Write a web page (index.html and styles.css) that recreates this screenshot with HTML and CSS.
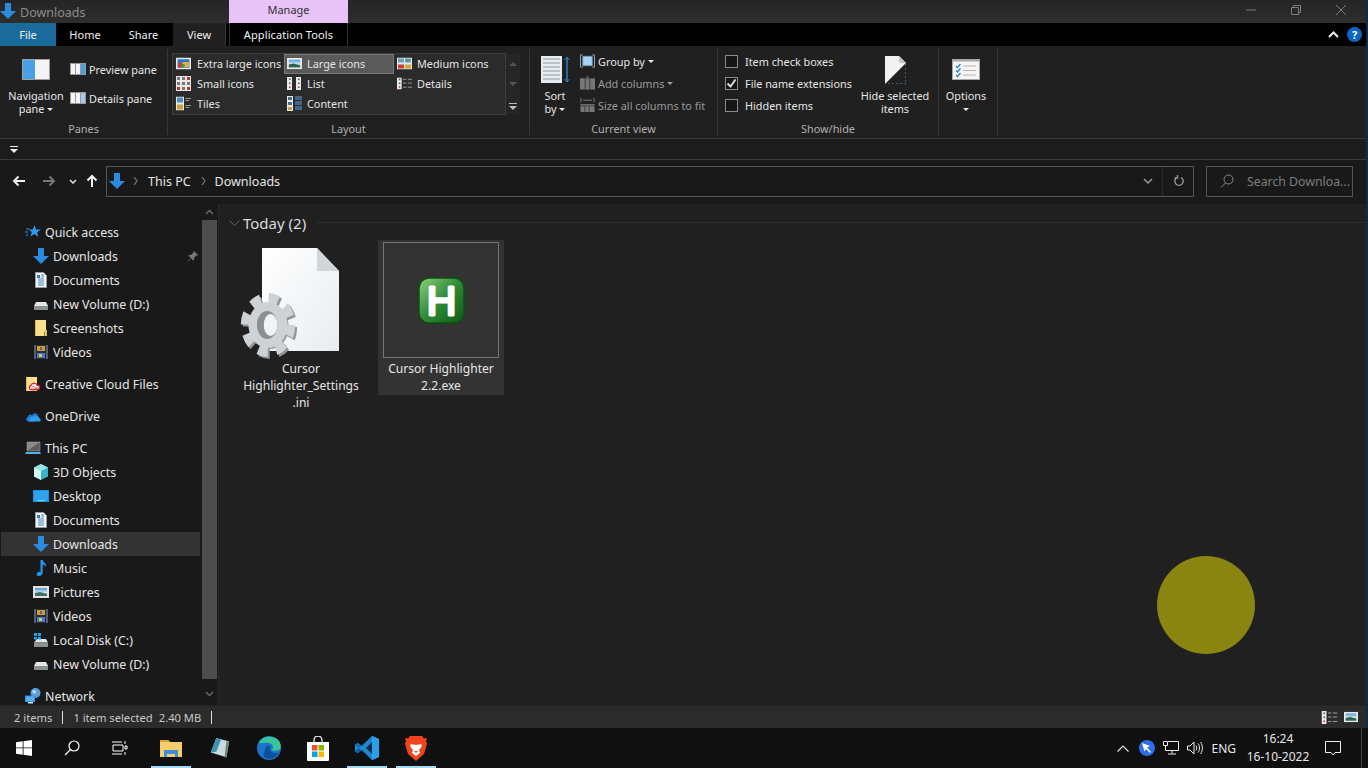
FILE: index.html
```html
<!DOCTYPE html>
<html lang="en">
<head>
    <meta charset="UTF-8">
    <title>Downloads</title>
    <link rel="stylesheet" href="styles.css">
</head>
<body>
    <svg class="defs" width="0" height="0">
        <defs>
            <linearGradient id="pageFill" x1="0" y1="0" x2="1" y2="1"><stop offset="0" stop-color="#ffffff"/><stop offset="1" stop-color="#e9ecef"/></linearGradient>
            <linearGradient id="hFill" x1="0" y1="0" x2="1" y2="1"><stop offset="0" stop-color="#8fd07f"/><stop offset="0.5" stop-color="#2f8a35"/><stop offset="1" stop-color="#0f5a17"/></linearGradient>
            <linearGradient id="skyFill" x1="0" y1="0" x2="0" y2="1"><stop offset="0" stop-color="#4a9bd8"/><stop offset="0.55" stop-color="#cfe3ea"/><stop offset="1" stop-color="#4d7f70"/></linearGradient>
            <symbol id="i-down" viewBox="0 0 16 16"><path d="M5 0h6v8h5l-8 8-8-8h5z" fill="#2b8be0"/></symbol>
            <symbol id="i-star" viewBox="0 0 16 16"><path d="M9.500 1l1.600 4.400 4.600.2-3.600 2.900 1.200 4.500L9.500 10l-3.900 2.600 1.200-4.500L3.500 5.600l4.400-.2z" fill="#2c9bf0"/><path d="M1 5h3M0 8h3M1 11h2" stroke="#2c9bf0"/></symbol>
            <symbol id="i-doc" viewBox="0 0 16 16"><path d="M2.500.5h8l3 3v12h-11z" fill="#f2f4f6" stroke="#9a9a9a"/><path d="M5 7h6M5 9h6M5 11h6M5 13h6M8 3h3M8 5h3" stroke="#4a86c5"/><path d="M4 3h3v3H4z" fill="#3b78b8"/></symbol>
            <symbol id="i-drive" viewBox="0 0 16 16"><path d="M3 6h10l2 4H1z" fill="#e6e6e6"/><path d="M1 10h14v4H1z" fill="#8f8f8f"/><path d="M11 11.500h2v1.200h-2z" fill="#4bd14b"/></symbol>
            <symbol id="i-cdrive" viewBox="0 0 16 16"><path d="M4 7h9l2 3.500H1z" fill="#e6e6e6"/><path d="M1 10.500h14V15H1z" fill="#8f8f8f"/><path d="M11 12h2v1.200h-2z" fill="#4bd14b"/><path d="M1 1h3v3H1zM5 1h3v3H5zM1 5h3v2.500H1zM5 5h3v2.500H5z" fill="#18a8ef"/></symbol>
            <symbol id="i-folder" viewBox="0 0 16 16"><path d="M2 0h11v12l-1.500 0V16H2z" fill="#fbe08e"/><path d="M2 0h1v16H2z" fill="#e0b84c"/><path d="M12 10h2v6h-2z" fill="#e9c25a"/></symbol>
            <symbol id="i-film" viewBox="0 0 16 16"><path d="M1 1h14v14H1z" fill="#2d2d2d"/><path d="M1 1h2v14H1zM13 1h2v14h-2z" fill="#54606c"/><path d="M4 2h8v5H4z" fill="#c9a13a"/><path d="M4 9h8v5H4z" fill="#3f7ccc"/><path d="M7 3h2v3H7z" fill="#7e4fa0"/><path d="M6 10h3v3H6z" fill="#e6c24c"/></symbol>
            <symbol id="i-cc" viewBox="0 0 16 16"><path d="M1 1h11v14H1z" fill="#fbe08e"/><path d="M1 1h1v14H1z" fill="#e0b84c"/><path d="M6 13.500c-2 0-2.500-3.500 0-4 .6-2.600 5-3 6-.3 3.500 0 3.500 4.300 0 4.300z" fill="#fff" stroke="#d8262c" stroke-width="1.300"/><path d="M7 11.500c1-1.500 2-1.500 3 0s2 .7 2.500-.5" fill="none" stroke="#d8262c"/></symbol>
            <symbol id="i-onedrive" viewBox="0 0 16 12"><path d="M4 11.500C1 11.500 0 8 2.800 7 3 4.500 6 3.800 7 5.500 8.500 2 13 3 13 6.500l-4 5z" fill="#1f78d1"/><path d="M4 11.500h10.500c1.800-.4 1.600-3.300-.5-3.600C13.500 5.500 10 5 9 7 7 5.500 4.500 7 5 9c-1.500 0-2 1.500-1 2.500z" fill="#2aa1ec"/></symbol>
            <symbol id="i-pc" viewBox="0 0 16 14"><path d="M2 1h13v9H2z" fill="#5c5c5c"/><path d="M2 1h13L2 10z" fill="#8a8a8a"/><path d="M2 1h13v9H2z" fill="none" stroke="#9a9a9a" stroke-width=".6"/><path d="M1 11h14l1 2H0z" fill="#4fb2ec"/></symbol>
            <symbol id="i-cube" viewBox="0 0 16 16"><path d="M8 0l7 3.500v9L8 16l-7-3.500v-9z" fill="#35b5c5"/><path d="M8 0l7 3.500L8 7 1 3.500z" fill="#9ae6e6"/><path d="M1 3.500L8 7v9l-7-3.500z" fill="#d6f6f4"/></symbol>
            <symbol id="i-desktop" viewBox="0 0 16 12"><path d="M0 0h16v12H0z" fill="#1c8fe8"/><path d="M1 1h14v9.500H1z" fill="#2fa2f2"/><path d="M4 10.500h8v.6H4z" fill="#dff"/></symbol>
            <symbol id="i-music" viewBox="0 0 16 16"><path d="M7.500 0h2.200c.3 2.500 3.800 3 3.300 7-.8-1.500-2-2.300-3.300-2.500V13c0 2-2 3-3.800 3-1.500 0-2.500-1-2.300-2 .3-1.500 2.500-2.500 3.900-2z" fill="#1f97ee"/></symbol>
            <symbol id="i-picture" viewBox="0 0 16 12"><path d="M0 0h16v12H0z" fill="#e3e3e3"/><path d="M2 2h12v8H2z" fill="url(#skyFill)"/><path d="M2 7l5-1 7 2v2H2z" fill="#406f63"/></symbol>
            <symbol id="i-net" viewBox="0 0 16 16"><circle cx="10.500" cy="5" r="5" fill="#5a9fd8"/><path d="M7 3c2-2 4-1 4 1s-2 2-3 1z" fill="#b9dcf4"/><path d="M0 7.500h10v6.500H0z" fill="#2f8fe0"/><path d="M1 8.500h8v4.500H1z" fill="#57b2f2"/><path d="M3 14h5v1.500H3z" fill="#cfe8fb"/></symbol>
            <symbol id="i-pane" viewBox="0 0 16 12"><path d="M0 0h16v12H0z" fill="#9a9a9a"/><path d="M1 1h14v10H1z" fill="#f4f4f4"/></symbol>
            <symbol id="i-large" viewBox="0 0 16 12"><path d="M0 0h16v12H0z" fill="#e8e8e8"/><path d="M2 2h12v8H2z" fill="url(#skyFill)"/><path d="M2 7l5-1 7 2v2H2z" fill="#2e5f55"/></symbol>
            <symbol id="i-xl" viewBox="0 0 14 11"><path d="M0 0h14v11H0z" fill="#e8e8e8"/><path d="M1.500 1.500h11v8h-11z" fill="#2a76c6"/><path d="M2 5h4v4H2z" fill="#d8342c"/><path d="M6 4h6v5H6z" fill="#e2b53c"/><path d="M5 6h3v3H5z" fill="#3e9a3e"/></symbol>
            <symbol id="i-medium" viewBox="0 0 15 12"><path d="M0 0h15v12H0z" fill="#e8e8e8"/><path d="M1 1h6v4H1zM8 1h6v4H8z" fill="#6aa0c8"/><path d="M1 7h6v4H1z" fill="#c8432f"/><path d="M8 7h6v4H8z" fill="#d0a83c"/><path d="M9 2h3v2H9z" fill="#4a9a4c"/></symbol>
            <symbol id="i-small" viewBox="0 0 15 15"><path d="M0 0h15v15H0z" fill="#e8e8e8"/><path d="M1 1h3v3H1zM6 1h3v3H6zM1 6h3v3H1zM6 6h3v3H6zM11 6h3v3h-3zM6 11h3v3H6z" fill="#777"/><path d="M11 1h3v3h-3zM1 11h3v3H1zM11 11h3v3h-3z" fill="#b83428"/></symbol>
            <symbol id="i-list" viewBox="0 0 15 13"><path d="M0 0h5v13H0zM9 0h5v13H9z" fill="#e8e8e8"/><path d="M2 1.500h1.500V3H2zM11 1.500h1.500V3H11zM2 5.500h1.500V7H2zM11 5.500h1.500V7H11zM11 9.500h1.500V11H11z" fill="#555"/><path d="M2 9.500h1.500V11H2z" fill="#b83428"/></symbol>
            <symbol id="i-details" viewBox="0 0 16 13"><path d="M0 0h5v13H0z" fill="#e8e8e8"/><path d="M2 1.500h1.500V3H2zM2 5.500h1.500V7H2z" fill="#555"/><path d="M2 9.500h1.500V11H2z" fill="#b83428"/><path d="M6.500 2h3.500M11.500 2H16M6.500 6h3.500M11.500 6H16M6.500 10.500h3.500M11.500 10.500H16" stroke="#9a9a9a"/></symbol>
            <symbol id="i-tiles" viewBox="0 0 15 14"><path d="M0 0h8v14H0z" fill="#e8e8e8"/><path d="M1 1h6v5H1z" fill="#4c8fc0"/><path d="M1 8h6v5H1z" fill="#c8a03c"/><path d="M9.500 2H15M9.500 4H13M9.500 9H15M9.500 11H13" stroke="#9a9a9a"/></symbol>
            <symbol id="i-content" viewBox="0 0 15 15"><path d="M0 0h6v15H0z" fill="#e8e8e8"/><path d="M1 1h4v3H1zM1 6h4v3H1z" fill="#4c6f90"/><path d="M1 11h4v3H1z" fill="#c8a03c"/><path d="M8 1h7M8 3h7M8 6h7M8 8h7M8 11h7M8 13h7" stroke="#5ea5e6"/></symbol>
            <symbol id="i-checks" viewBox="0 0 28 21"><path d="M0 0h28v21H0z" fill="#a8a8a8"/><path d="M1 2.500h26V20H1z" fill="#f5f5f5"/><path d="M11 7h13M11 11.500h13M11 16h13" stroke="#b5b5b5"/><path d="M4 7l1.500 1.500L8.500 5M4 11.500L5.500 13l3-3.500M4 16l1.500 1.500 3-3.500" fill="none" stroke="#2f86d6" stroke-width="1.500"/></symbol>
        </defs>
    </svg>

    <div class="window">
        <header class="titlebar">
            <svg class="title-icon"><use href="#i-down"/></svg>
            <span class="title-text">Downloads</span>
            <div class="manage-tab">Manage</div>
            <div class="win-buttons">
                <svg width="12" height="12" viewBox="0 0 12 12"><path d="M1 6h10" stroke="#7d7d7d"/></svg>
                <svg width="12" height="12" viewBox="0 0 12 12"><path d="M1.500 3.500h7v7h-7zM3.500 3.500v-2h7v7h-2" fill="none" stroke="#7d7d7d"/></svg>
                <svg width="12" height="12" viewBox="0 0 12 12"><path d="M1 1l10 10M11 1L1 11" stroke="#7d7d7d"/></svg>
            </div>
        </header>

        <nav class="tabs">
            <div class="tab tab-file">File</div>
            <div class="tab tab-home">Home</div>
            <div class="tab tab-share">Share</div>
            <div class="tab tab-view">View</div>
            <div class="tab tab-tools">Application Tools</div>
            <div class="tabs-right">
                <svg width="11" height="7" viewBox="0 0 11 7"><path d="M1 6l4.500-4.500L10 6" fill="none" stroke="#eee" stroke-width="2"/></svg>
                <span class="help">?</span>
            </div>
        </nav>

        <section class="ribbon">
            <div class="group group-panes">
                <div class="group-body">
                    <div class="big-btn nav-btn">
                        <svg class="big-icon" viewBox="0 0 28 21"><path d="M0 0h28v21H0z" fill="#a0a0a0"/><path d="M1 1h26v19H1z" fill="#f4f4f4"/><path d="M1 1h12v19H1z" fill="#4aa0e6"/></svg>
                        <span>Navigation</span>
                        <span>pane <i class="caret"></i></span>
                    </div>
                    <div class="pane-btns">
                        <div class="pane-btn"><svg viewBox="0 0 16 12"><use href="#i-pane"/><path d="M5 1h1v10H5zM10 1h1v10h-1z" fill="#999"/><path d="M11 1h4v10h-4z" fill="#4aa0e6"/></svg>Preview pane</div>
                        <div class="pane-btn"><svg viewBox="0 0 16 12"><use href="#i-pane"/><path d="M5 1h1v10H5zM10 1h1v10h-1z" fill="#999"/><path d="M11 2h4M11 4h4M11 6h4M11 8h4M11 10h4" stroke="#4aa0e6"/></svg>Details pane</div>
                    </div>
                </div>
                <div class="group-label">Panes</div>
            </div>

            <div class="group group-layout">
                <div class="group-body">
                    <div class="gallery">
                        <div class="cell"><svg class="ci" viewBox="0 0 14 11"><use href="#i-xl"/></svg>Extra large icons</div>
                        <div class="cell cell-on"><svg class="ci" viewBox="0 0 16 12"><use href="#i-large"/></svg>Large icons</div>
                        <div class="cell"><svg class="ci" viewBox="0 0 15 12"><use href="#i-medium"/></svg>Medium icons</div>
                        <div class="cell"><svg class="ci" viewBox="0 0 15 15"><use href="#i-small"/></svg>Small icons</div>
                        <div class="cell"><svg class="ci" viewBox="0 0 15 13"><use href="#i-list"/></svg>List</div>
                        <div class="cell"><svg class="ci" viewBox="0 0 16 13"><use href="#i-details"/></svg>Details</div>
                        <div class="cell"><svg class="ci" viewBox="0 0 15 14"><use href="#i-tiles"/></svg>Tiles</div>
                        <div class="cell"><svg class="ci" viewBox="0 0 15 15"><use href="#i-content"/></svg>Content</div>
                    </div>
                    <div class="gallery-scroll">
                        <svg width="8" height="5" viewBox="0 0 8 5"><path d="M0 5l4-4 4 4z" fill="#555"/></svg>
                        <svg width="8" height="5" viewBox="0 0 8 5"><path d="M0 0l4 4 4-4z" fill="#555"/></svg>
                        <svg width="8" height="7" viewBox="0 0 8 7"><path d="M0 0h8v1H0z" fill="#bbb"/><path d="M0 3h8L4 7z" fill="#bbb"/></svg>
                    </div>
                </div>
                <div class="group-label">Layout</div>
            </div>

            <div class="group group-current">
                <div class="group-body">
                    <div class="big-btn sort-btn">
                        <svg class="sort-icon" viewBox="0 0 29 27"><path d="M0 0h21v27H0z" fill="#e4ecf0"/><path d="M2 3h17M2 7h17M2 11h17M2 15h17M2 19h17M2 23h17" stroke="#b9c3c9" stroke-width="2"/><path d="M26 1v25" stroke="#2c7cc8" stroke-width="1.500"/><path d="M23.500 4L26 1l2.500 3M23.500 23l2.500 3 2.500-3" fill="none" stroke="#2c7cc8"/></svg>
                        <span>Sort</span>
                        <span>by <i class="caret"></i></span>
                    </div>
                    <div class="view-btns">
                        <div class="view-btn"><svg viewBox="0 0 16 14"><path d="M3 .5H.5v13H3M13 .5h2.500v13H13" fill="none" stroke="#aaa"/><path d="M3 2h10v10H3z" fill="#a9d3f5" stroke="#6a9fc8"/></svg>Group by <i class="caret"></i></div>
                        <div class="view-btn is-off"><svg viewBox="0 0 16 14"><path d="M0 2h16v12H0z" fill="#777"/><path d="M5 2h1v12H5zM10 2h1v12h-1z" fill="#3a3a3a"/><path d="M6 0h4L8 2z" fill="#777"/></svg>Add columns <i class="caret"></i></div>
                        <div class="view-btn is-dim"><svg viewBox="0 0 16 16"><path d="M0 7h16v9H0z" fill="#777"/><path d="M0 9h16M5 9v7M10 9v7" stroke="#3a3a3a"/><path d="M.500 0v5M15.500 0v5M3 2.500h10" stroke="#888"/></svg>Size all columns to fit</div>
                    </div>
                </div>
                <div class="group-label">Current view</div>
            </div>

            <div class="group group-show">
                <div class="group-body">
                    <div class="checks">
                        <label class="check"><span class="box"></span>Item check boxes</label>
                        <label class="check"><span class="box"><svg width="11" height="11" viewBox="0 0 11 11"><path d="M1.500 5.500l3 3 5-7" fill="none" stroke="#ddd" stroke-width="2"/></svg></span>File name extensions</label>
                        <label class="check"><span class="box"></span>Hidden items</label>
                    </div>
                    <div class="big-btn hide-btn">
                        <svg class="hide-icon" viewBox="0 0 21 28"><path d="M0 28V0h14l7 7v21z" fill="#f2f2f2"/><path d="M0 28L21 7v21z" fill="#202020"/><path d="M14 0v7h7" fill="#c8c8c8"/><path d="M21 8v20H1" fill="none" stroke="#3a9ae8" stroke-dasharray="2 2"/></svg>
                        <span>Hide selected</span>
                        <span>items</span>
                    </div>
                </div>
                <div class="group-label">Show/hide</div>
            </div>

            <div class="group group-options">
                <div class="group-body">
                    <div class="big-btn opt-btn">
                        <svg class="big-icon" viewBox="0 0 28 21"><use href="#i-checks"/></svg>
                        <span>Options</span>
                        <span><i class="caret"></i></span>
                    </div>
                </div>
                <div class="group-label"></div>
            </div>
        </section>

        <div class="qat">
            <svg width="8" height="7" viewBox="0 0 8 7"><path d="M0 0h8v1H0z" fill="#eee"/><path d="M0 3h8L4 7z" fill="#eee"/></svg>
        </div>

        <div class="addressrow">
            <svg class="nav-arrow" viewBox="0 0 14 12"><path d="M13 6H2M6.500 1.500L2 6l4.500 4.500" fill="none" stroke="#f0f0f0" stroke-width="2"/></svg>
            <svg class="nav-arrow arrow-off" viewBox="0 0 14 12"><path d="M1 6h11M7.500 1.500L12 6l-4.500 4.500" fill="none" stroke="#777" stroke-width="2"/></svg>
            <svg class="nav-drop" viewBox="0 0 8 5"><path d="M1 1l3 3 3-3" fill="none" stroke="#ddd" stroke-width="1.500"/></svg>
            <svg class="nav-up" viewBox="0 0 12 14"><path d="M6 13V2M1.500 6.500L6 2l4.500 4.500" fill="none" stroke="#f0f0f0" stroke-width="2"/></svg>
            <div class="address">
                <svg class="addr-icon"><use href="#i-down"/></svg>
                <svg class="crumb" viewBox="0 0 5 8"><path d="M1 0l3 4-3 4" fill="none" stroke="#777" stroke-width="1.200"/></svg>
                <span class="addr-pc">This PC</span>
                <svg class="crumb crumb-2" viewBox="0 0 5 8"><path d="M1 0l3 4-3 4" fill="none" stroke="#777" stroke-width="1.200"/></svg>
                <span class="addr-dl">Downloads</span>
                <svg class="addr-drop" viewBox="0 0 10 6"><path d="M1 1l4 4 4-4" fill="none" stroke="#999" stroke-width="1.500"/></svg>
                <span class="addr-sep"></span>
                <svg class="addr-refresh" viewBox="0 0 12 12"><path d="M4 2.500a4.200 4.200 0 1 0 4 0M4.500 0v3h-3" fill="none" stroke="#999" stroke-width="1.400"/></svg>
            </div>
            <div class="search">
                <svg viewBox="0 0 14 14"><circle cx="8.500" cy="5.500" r="4.500" fill="none" stroke="#888"/><path d="M5.500 9L1 13.500" stroke="#888"/></svg>
                <span>Search Downloa...</span>
            </div>
        </div>

        <main class="main">
            <aside class="sidebar">
                <ul class="tree">
                    <li class="root"><svg viewBox="0 0 16 16"><use href="#i-star"/></svg>Quick access</li>
                    <li><svg viewBox="0 0 16 16"><use href="#i-down"/></svg>Downloads<svg class="pin" viewBox="0 0 11 11"><path d="M7 0l4 4-1 .8-.8-.2L7 7l.3 1.500-1 1-2.300-2.300L1 10.500.5 10 3.800 7 1.500 4.700l1-1L4 4l2.400-2.200-.2-.8z" fill="#777"/></svg></li>
                    <li><svg viewBox="0 0 16 16"><use href="#i-doc"/></svg>Documents</li>
                    <li><svg viewBox="0 0 16 16"><use href="#i-drive"/></svg>New Volume (D:)</li>
                    <li><svg viewBox="0 0 16 16"><use href="#i-folder"/></svg>Screenshots</li>
                    <li class="last"><svg viewBox="0 0 16 16"><use href="#i-film"/></svg>Videos</li>
                    <li class="root last"><svg viewBox="0 0 16 16"><use href="#i-cc"/></svg>Creative Cloud Files</li>
                    <li class="root last"><svg viewBox="0 0 16 12"><use href="#i-onedrive"/></svg>OneDrive</li>
                    <li class="root"><svg viewBox="0 0 16 14"><use href="#i-pc"/></svg>This PC</li>
                    <li><svg viewBox="0 0 16 16"><use href="#i-cube"/></svg>3D Objects</li>
                    <li><svg viewBox="0 0 16 12"><use href="#i-desktop"/></svg>Desktop</li>
                    <li><svg viewBox="0 0 16 16"><use href="#i-doc"/></svg>Documents</li>
                    <li class="current"><svg viewBox="0 0 16 16"><use href="#i-down"/></svg>Downloads</li>
                    <li><svg viewBox="0 0 16 16"><use href="#i-music"/></svg>Music</li>
                    <li><svg viewBox="0 0 16 12"><use href="#i-picture"/></svg>Pictures</li>
                    <li><svg viewBox="0 0 16 16"><use href="#i-film"/></svg>Videos</li>
                    <li><svg viewBox="0 0 16 16"><use href="#i-cdrive"/></svg>Local Disk (C:)</li>
                    <li class="last"><svg viewBox="0 0 16 16"><use href="#i-drive"/></svg>New Volume (D:)</li>
                    <li class="root"><svg viewBox="0 0 16 16"><use href="#i-net"/></svg>Network</li>
                </ul>
                <div class="scrollbar">
                    <svg width="9" height="6" viewBox="0 0 9 6"><path d="M1 5l3.500-3.500L8 5" fill="none" stroke="#666" stroke-width="1.500"/></svg>
                    <div class="thumb"></div>
                    <svg width="9" height="6" viewBox="0 0 9 6"><path d="M1 1l3.500 3.500L8 1" fill="none" stroke="#666" stroke-width="1.500"/></svg>
                </div>
            </aside>

            <section class="files">
                <div class="files-head">
                    <svg width="11" height="6" viewBox="0 0 11 6"><path d="M.5.500l5 5 5-5" fill="none" stroke="#666"/></svg>
                    <span>Today (2)</span>
                    <div class="head-line"></div>
                </div>
                <div class="tiles">
                    <div class="tile">
                        <svg class="tile-icon" viewBox="0 0 116 116">
                            <path d="M19 6h55l22 23v80H19z" fill="url(#pageFill)"/>
                            <path d="M74 6v23h22z" fill="#d3d6d9"/>
                            <g transform="translate(27 85) scale(.85 1)">
                                <circle r="26" fill="none" stroke="#8f959b" stroke-width="12" stroke-dasharray="11 9.420"/>
                                <circle r="22" fill="#8f959b"/>
                            </g>
                            <g transform="translate(25 83) scale(.85 1)">
                                <circle r="26" fill="none" stroke="#cdd2d6" stroke-width="12" stroke-dasharray="11 9.420"/>
                                <circle r="23" fill="#cdd2d6"/>
                                <ellipse cx="-1" cy="0" rx="12" ry="14" fill="#8b8f93"/>
                                <ellipse cx="3" cy="0" rx="8" ry="11" fill="#f2f3f4"/>
                            </g>
                        </svg>
                        <div class="tile-name">Cursor Highlighter_Settings .ini</div>
                    </div>
                    <div class="tile tile-on">
                        <div class="tile-frame">
                            <svg class="h-logo" viewBox="0 0 47 47">
                                <rect x="1" y="1" width="45" height="45" rx="10" fill="url(#hFill)" stroke="#0e4f12" stroke-width="1.500"/>
                                <text x="23.500" y="38.200" class="h-letter">H</text>
                            </svg>
                        </div>
                        <div class="tile-name">Cursor Highlighter 2.2.exe</div>
                    </div>
                </div>
            </section>
        </main>

        <footer class="status">
            <span class="st-count">2 items</span>
            <span class="st-sep"></span>
            <span class="st-sel">1 item selected</span>
            <span class="st-size">2.40 MB</span>
            <span class="st-sep"></span>
            <svg class="st-details" viewBox="0 0 16 13"><use href="#i-details"/></svg>
            <svg class="st-large" viewBox="0 0 16 12"><use href="#i-large"/></svg>
        </footer>
    </div>

    <div class="taskbar">
        <div class="task-slot"><svg width="16" height="16" viewBox="0 0 16 16"><path d="M0 2.300l6.700-1v6.200H0zM7.500 1.200L16 0v7.500H7.500zM0 8.300h6.700v6.400L0 13.700zM7.500 8.300H16V16l-8.500-1.200z" fill="#fff"/></svg></div>
        <div class="task-slot"><svg width="16" height="16" viewBox="0 0 16 16"><circle cx="10" cy="6" r="5" fill="none" stroke="#fff" stroke-width="1.200"/><path d="M6.500 9.500L1 15" stroke="#fff" stroke-width="1.300"/></svg></div>
        <div class="task-slot"><svg width="16" height="16" viewBox="0 0 16 16"><path d="M0 2h10M0 14h10M1 5h10v6H1zM13 1v3M13 6h2v3h-2zM13 12v3" fill="none" stroke="#fff"/></svg></div>
        <div class="apps">
            <div class="app is-open"><svg width="22" height="18" viewBox="0 0 22 18"><path d="M0 1h8l2 2h12v15H0z" fill="#f5cf6a"/><path d="M0 1h8l2 2H0z" fill="#d9a63c"/><path d="M4 11h14v7h-3v-3H7v3H4z" fill="#3d8fd8"/></svg></div>
            <div class="app"><svg width="24" height="22" viewBox="0 0 24 24"><path d="M8 1l14 4-3 17L2 17z" fill="#c7dbe0"/><path d="M8 1L2 17l6-1 5-13z" fill="#3a93b5"/><path d="M19 5l3 0-3 17-2 0z" fill="#6e7f78"/></svg></div>
            <div class="app"><svg width="24" height="24" viewBox="0 0 24 24"><circle cx="12" cy="12" r="12" fill="#1d73c9"/><path d="M2 7C5 0 14-1 20 3c4 3 5 9 2 11-3 1-6 1-8 0 3-1 3-6-2-7-5-1-8 1-10 0z" fill="#39c49a"/><path d="M8 14c0-3 2-5 5-4-1 2 0 6 4 7 2 .6 4 0 5-1-2 5-8 8-13 6-4-2-2-6-1-8z" fill="#0c4f9e"/></svg></div>
            <div class="app"><svg width="24" height="25" viewBox="0 0 24 25"><path d="M8 7V4a4 4 0 0 1 8 0v3" fill="none" stroke="#eee" stroke-width="1.300"/><path d="M1 6h22v18a1 1 0 0 1-1 1H2a1 1 0 0 1-1-1z" fill="#fff"/><path d="M6 9h5.500v5.500H6z" fill="#f25022"/><path d="M12.500 9H18v5.500h-5.500z" fill="#7fba00"/><path d="M6 15.500h5.500V21H6z" fill="#00a4ef"/><path d="M12.500 15.500H18V21h-5.500z" fill="#ffb900"/></svg></div>
            <div class="app is-open"><svg width="24" height="24" viewBox="0 0 24 24"><path d="M17 0l7 3v18l-7 3L7 14l-4 3-3-1.500V8.500L3 7l4 3z" fill="#1f8ad2"/><path d="M17 6l-6 6 6 6z" fill="#0f2d4a"/><path d="M17 0L3.500 12 0 8.500 3 7l4 3z" fill="#0f6cb0"/><path d="M17 24L3.500 12 0 15.500 3 17l4-3z" fill="#0a5d9c"/><path d="M17 0l7 3v18l-7 3z" fill="#2aa0e8"/></svg></div>
            <div class="app is-open"><svg width="22" height="25" viewBox="0 0 22 25"><path d="M5 0h12l2 2.500 3-.5-1 3 1 3-3 10-8 7-8-7L0 8l1-3-1-3 3 .5z" fill="#f1441d"/><path d="M6 8l3 .8h4L16 8l1 2-3 4 1 3-4 3-4-3 1-3-3-4z" fill="#fff"/><path d="M9 15h4l-2 2z" fill="#f1441d"/></svg></div>
        </div>

        <div class="tray">
            <svg class="tray-chev" width="12" height="7" viewBox="0 0 12 7"><path d="M.5 6.500L6 1l5.500 5.500" fill="none" stroke="#ddd" stroke-width="1.200"/></svg>
            <div class="tray-cursor"><svg width="10" height="10" viewBox="0 0 10 10"><path d="M0 0l8 3-3 1.500L9 9 8 10 4 6 2.500 8.500z" fill="#fff"/></svg></div>
            <svg class="tray-icon" width="16" height="16" viewBox="0 0 16 16"><path d="M2.500 1.500h13v9h-13zM9 10.500v3M5 14h8" fill="none" stroke="#eee"/><path d="M0 1h5v5H0z" fill="#101010"/><path d="M.5 1.500h4v4h-4z" fill="none" stroke="#eee"/></svg>
            <svg class="tray-icon" width="16" height="16" viewBox="0 0 16 16"><path d="M.5 6h2.500L7 2v12l-4-4H.5zM9 5.500c1 1.500 1 3.500 0 5M11 3.500c2 2.500 2 6.500 0 9M13.500 2c2.500 3.500 2.500 8.500 0 12" fill="none" stroke="#eee"/></svg>
            <span class="tray-lang">ENG</span>
            <div class="clock"><span>16:24</span><span>16-10-2022</span></div>
            <svg class="tray-note" width="16" height="16" viewBox="0 0 16 16"><path d="M.5 1.500h15v11H10L8 15l-2-2.500H.5z" fill="none" stroke="#eee"/></svg>
            <span class="show-desktop"></span>
        </div>
    </div>

    <div class="highlighter"></div>
</body>
</html>
```
FILE: styles.css
```css
/* Page */
html, body {
    margin: 0;
    padding: 0;
    height: 100%;
    overflow: hidden;
    background: #0d2b4f;
}

body {
    font-family: "Noto Sans", "Open Sans", sans-serif;
    font-size: 12px;
    color: #e6e6e6;
    display: flex;
    flex-direction: column;
}

.defs {
    position: absolute;
}

.window {
    width: 1366px;
    height: 728px;
    display: flex;
    flex-direction: column;
    background: #202020;
}

/* Title bar */
.titlebar {
    height: 23px;
    display: flex;
    background: linear-gradient(#252525, #2e2e2e);
    flex-shrink: 0;
}

.title-icon {
    width: 16px;
    height: 16px;
    margin: 3px 0 0 0;
}

.title-text {
    margin: 4px 0 0 4px;
    width: 209px;
    color: #8c8c8c;
    font-size: 12.5px;
}

.manage-tab {
    width: 119px;
    text-align: center;
    background: #e8c3f8;
    color: #333;
    font-size: 11px;
    padding-top: 2px;
}

.win-buttons {
    margin-left: auto;
    display: flex;
    gap: 33px;
    padding: 4px 19px 0 0;
}

/* Ribbon tabs */
.tabs {
    height: 23px;
    background: #000;
    display: flex;
    flex-shrink: 0;
    font-size: 11px;
    color: #f0f0f0;
}

.tab {
    line-height: 23px;
    text-align: center;
}

.tab-file {
    width: 56px;
    background: #1a6a9c;
}

.tab-home {
    width: 58px;
}

.tab-share {
    width: 59px;
}

.tab-view {
    width: 53px;
    background: #202020;
    margin-right: 3px;
    border-right: 1px solid #333;
    box-sizing: border-box;
}

.tab-tools {
    width: 119px;
    border-left: 1px solid #333;
    border-right: 1px solid #333;
    box-sizing: border-box;
    letter-spacing: .1px;
}

.tabs-right {
    margin-left: auto;
    display: flex;
    align-items: center;
    gap: 8px;
    padding-right: 4px;
}

.help {
    width: 15px;
    height: 15px;
    border-radius: 50%;
    background: #0a67c8;
    color: #fff;
    font-weight: bold;
    font-size: 11px;
    line-height: 15px;
    text-align: center;
}

/* Ribbon */
.ribbon {
    height: 93px;
    display: flex;
    flex-shrink: 0;
    background: #202020;
    border-bottom: 1px solid #3a3a3a;
    box-sizing: border-box;
    font-size: 10.85px;
}

.group {
    display: flex;
    flex-direction: column;
    border-right: 1px solid #383838;
    margin-top: 3px;
    margin-bottom: 3px;
    box-sizing: border-box;
}

.group-panes {
    width: 168px;
}

.group-layout {
    width: 362px;
}

.group-current {
    width: 188px;
}

.group-show {
    width: 221px;
}

.group-options {
    width: 59px;
}

.group-body {
    flex: 1;
    display: flex;
}

.group-label {
    height: 19px;
    padding-top: 5px;
    line-height: 15px;
    box-sizing: border-box;
    text-align: center;
    color: #b0b0b0;
}

.big-btn {
    display: flex;
    flex-direction: column;
    align-items: center;
    line-height: 13px;
    white-space: nowrap;
}

.big-btn span {
    display: block;
}

.big-icon {
    width: 28px;
    height: 21px;
    margin: 10px 0 9px;
}

.caret {
    display: inline-block;
    width: 0;
    height: 0;
    border-left: 3px solid transparent;
    border-right: 3px solid transparent;
    border-top: 3px solid currentColor;
    vertical-align: 2px;
}

.nav-btn {
    width: 70px;
    margin-left: 1px;
    margin-right: -1px;
}

.pane-btns {
    display: flex;
    flex-direction: column;
    gap: 17px;
    padding-top: 14px;
}

.pane-btn {
    display: flex;
    align-items: center;
    gap: 3px;
    height: 12px;
}

.pane-btn svg {
    width: 16px;
    height: 12px;
}

/* Layout gallery */
.gallery {
    width: 332px;
    height: 60px;
    margin: 5px 0 0 5px;
    display: grid;
    grid-template-columns: 111px 110px 110px;
    grid-auto-rows: 20px;
    background: #2b2b2b;
    box-shadow: 0 0 0 1px #3c3c3c;
}

.cell {
    display: flex;
    align-items: center;
    white-space: nowrap;
    padding: 0 0 2px 3px;
    box-sizing: border-box;
}

.ci {
    width: 15px;
    height: 15px;
    margin-right: 5px;
    flex-shrink: 0;
}

.cell:nth-child(3n+1) .ci {
    margin-right: 6px;
}

.cell-on {
    background: #5a5a5a;
    box-shadow: inset 0 0 0 1px #787878;
}

.gallery-scroll {
    width: 14px;
    margin: 5px 0 0 1px;
    height: 60px;
    display: flex;
    flex-direction: column;
    align-items: center;
    justify-content: space-between;
    padding: 7px 0 4px;
    box-sizing: border-box;
    background: #262626;
}

/* Current view */
.sort-btn {
    width: 50px;
}

.sort-icon {
    width: 29px;
    height: 27px;
    margin: 7px 0 6px;
}

.view-btns {
    display: flex;
    flex-direction: column;
    gap: 8px;
    padding-top: 5px;
}

.view-btn {
    display: flex;
    align-items: center;
    gap: 3px;
    height: 14px;
    white-space: nowrap;
}

.view-btn svg {
    width: 15px;
    height: 14px;
}

.is-off, .is-dim {
    color: #9a9a9a;
}

/* Show/hide */
.checks {
    display: flex;
    flex-direction: column;
    gap: 9px;
    padding: 6px 0 0 7px;
    width: 134px;
}

.check {
    display: flex;
    align-items: center;
    gap: 7px;
    height: 13px;
    white-space: nowrap;
}

.box {
    width: 11px;
    height: 11px;
    border: 1px solid #8a8a8a;
    background: #161616;
    flex-shrink: 0;
    display: flex;
}

.hide-btn {
    width: 72px;
}

.hide-icon {
    width: 21px;
    height: 28px;
    margin: 7px 0 5px;
}

.opt-btn {
    width: 54px;
}

/* Quick access strip */
.qat {
    height: 21px;
    padding-left: 10px;
    display: flex;
    align-items: center;
    background: #1c1c1c;
    border-bottom: 1px solid #3a3a3a;
    box-sizing: border-box;
    flex-shrink: 0;
}

/* Address row */
.addressrow {
    height: 44px;
    display: flex;
    align-items: center;
    background: #191919;
    flex-shrink: 0;
    box-sizing: border-box;
    padding: 0 13px 2px 12px;
}

.nav-arrow {
    width: 14px;
    height: 12px;
}

.arrow-off {
    margin-left: 16px;
}

.nav-drop {
    width: 8px;
    height: 5px;
    margin-left: 13px;
}

.nav-up {
    width: 12px;
    height: 14px;
    margin-left: 9px;
}

.address {
    width: 1088px;
    height: 31px;
    margin-left: 8px;
    box-sizing: border-box;
    border: 1px solid #555;
    display: flex;
    align-items: center;
    padding-left: 2px;
    font-size: 12.5px;
}

.addr-icon {
    width: 16px;
    height: 16px;
}

.crumb {
    width: 5px;
    height: 8px;
    margin: 0 0 0 8px;
}

.crumb-2 {
    margin-left: 10px;
}

.addr-pc {
    margin-left: 10px;
}

.addr-dl {
    margin-left: 9px;
}

.addr-drop {
    width: 10px;
    height: 6px;
    margin-left: auto;
}

.addr-sep {
    width: 1px;
    height: 29px;
    margin-left: 9px;
    background: #2a2a2a;
}

.addr-refresh {
    width: 12px;
    height: 12px;
    margin: 0 8px 0 10px;
}

.search {
    width: 147px;
    height: 31px;
    margin-left: 12px;
    box-sizing: border-box;
    border: 1px solid #555;
    display: flex;
    align-items: center;
    color: #7d7d7d;
    white-space: nowrap;
    overflow: hidden;
    font-size: 12.3px;
}

.search svg {
    width: 14px;
    height: 14px;
    margin: 0 13px 0 13px;
    flex-shrink: 0;
}

/* Main area */
.main {
    flex: 1;
    display: flex;
    min-height: 0;
}

.sidebar {
    width: 219px;
    display: flex;
    background: #191919;
    overflow: hidden;
    flex-shrink: 0;
    border-right: 1px solid #2a2a2a;
    box-sizing: border-box;
    font-size: 12.4px;
}

.tree {
    list-style: none;
    margin: 0;
    padding: 16px 0 0 1px;
    width: 199px;
    flex-shrink: 0;
}

.tree li {
    height: 24px;
    display: flex;
    align-items: center;
    padding-left: 32px;
    box-sizing: border-box;
    white-space: nowrap;
}

.tree li > svg:first-child {
    width: 16px;
    height: 16px;
    margin-right: 4px;
    flex-shrink: 0;
}

.tree li.root {
    padding-left: 24px;
}

.tree li.last {
    margin-bottom: 8px;
}

.tree li.current {
    background: #333;
}

.pin {
    width: 11px;
    height: 11px;
    margin-left: auto;
    margin-right: 2px;
}

.scrollbar {
    width: 15px;
    margin-left: 2px;
    display: flex;
    flex-direction: column;
    align-items: center;
    background: #191919;
    padding-top: 5px;
    flex-shrink: 0;
}

.thumb {
    width: 15px;
    height: 459px;
    margin: 5px 0 12px;
    background: #4d4d4d;
}

/* Files */
.files {
    flex: 1;
    background: #202020;
    padding: 9px 0 0 10px;
}

.files-head {
    display: flex;
    align-items: center;
    height: 20px;
    font-size: 15px;
    color: #dcdcdc;
}

.files-head svg {
    margin-right: 3px;
}

.head-line {
    flex: 1;
    height: 1px;
    margin: 0 0 2px 9px;
    background: #2c2c2c;
}

.tiles {
    display: flex;
    gap: 14px;
    padding: 7px 0 0 9px;
}

.tile {
    width: 126px;
    height: 155px;
    display: flex;
    flex-direction: column;
    align-items: center;
}

.tile-on {
    background: #333;
}

.tile-icon {
    width: 116px;
    height: 116px;
    margin-top: 2px;
    flex-shrink: 0;
    overflow: visible;
}

.tile-frame {
    width: 116px;
    height: 116px;
    margin-top: 2px;
    box-sizing: border-box;
    border: 1px solid #777;
    display: flex;
    align-items: center;
    justify-content: center;
    flex-shrink: 0;
}

.h-logo {
    width: 47px;
    height: 47px;
}

.h-letter {
    font-family: "Liberation Sans", sans-serif;
    font-size: 41px;
    text-anchor: middle;
    fill: #fff;
    stroke: #fff;
    stroke-width: 3px;
    stroke-linejoin: round;
}

.tile-name {
    width: 120px;
    text-align: center;
    line-height: 17px;
    margin-top: 2px;
    color: #e6e6e6;
    font-size: 12.1px;
}

/* Status bar */
.status {
    height: 23px;
    flex-shrink: 0;
    display: flex;
    align-items: center;
    padding-left: 14px;
    background: #2b2b2b;
    color: #c8c8c8;
    border-top: 1px solid #242424;
    box-sizing: border-box;
    font-size: 11.2px;
}

.st-sep {
    width: 1px;
    height: 13px;
    background: #ddd;
    margin: 0 10px;
}

.st-size {
    margin-left: 6px;
}

.st-details {
    width: 17px;
    height: 13px;
    margin-left: auto;
}

.st-large {
    width: 14px;
    height: 12px;
    margin: 0 8px 0 6px;
}

/* Taskbar */
.taskbar {
    height: 40px;
    background: #101010;
    display: flex;
    flex-shrink: 0;
}

.task-slot {
    width: 48px;
    height: 40px;
    display: flex;
    align-items: center;
    justify-content: center;
    flex-shrink: 0;
}

.apps {
    display: flex;
    gap: 9px;
    padding-left: 7px;
}

.app {
    width: 40px;
    height: 40px;
    box-sizing: border-box;
    display: flex;
    align-items: center;
    justify-content: center;
}

.app.is-open {
    border-bottom: 2px solid #a5d8f3;
    padding-top: 2px;
}

.tray {
    margin-left: auto;
    display: flex;
    align-items: center;
    font-size: 12px;
}

.tray-cursor {
    width: 16px;
    height: 16px;
    margin-left: 10px;
    border-radius: 50%;
    background: #2d6fe8;
    display: flex;
    align-items: center;
    justify-content: center;
}

.tray-icon {
    margin-left: 8px;
}

.tray-lang {
    margin-left: 8px;
}

.clock {
    display: flex;
    flex-direction: column;
    align-items: center;
    width: 66px;
    margin-left: 9px;
    line-height: 18px;
}

.tray-note {
    margin-left: 14px;
}

.show-desktop {
    width: 1px;
    height: 40px;
    background: #444;
    margin: 0 6px 0 20px;
}

/* Cursor highlight ring, floats over the window */
.highlighter {
    position: absolute;
    left: 1157px;
    top: 556px;
    width: 98px;
    height: 98px;
    border-radius: 50%;
    background: #8a8410;
}
```
